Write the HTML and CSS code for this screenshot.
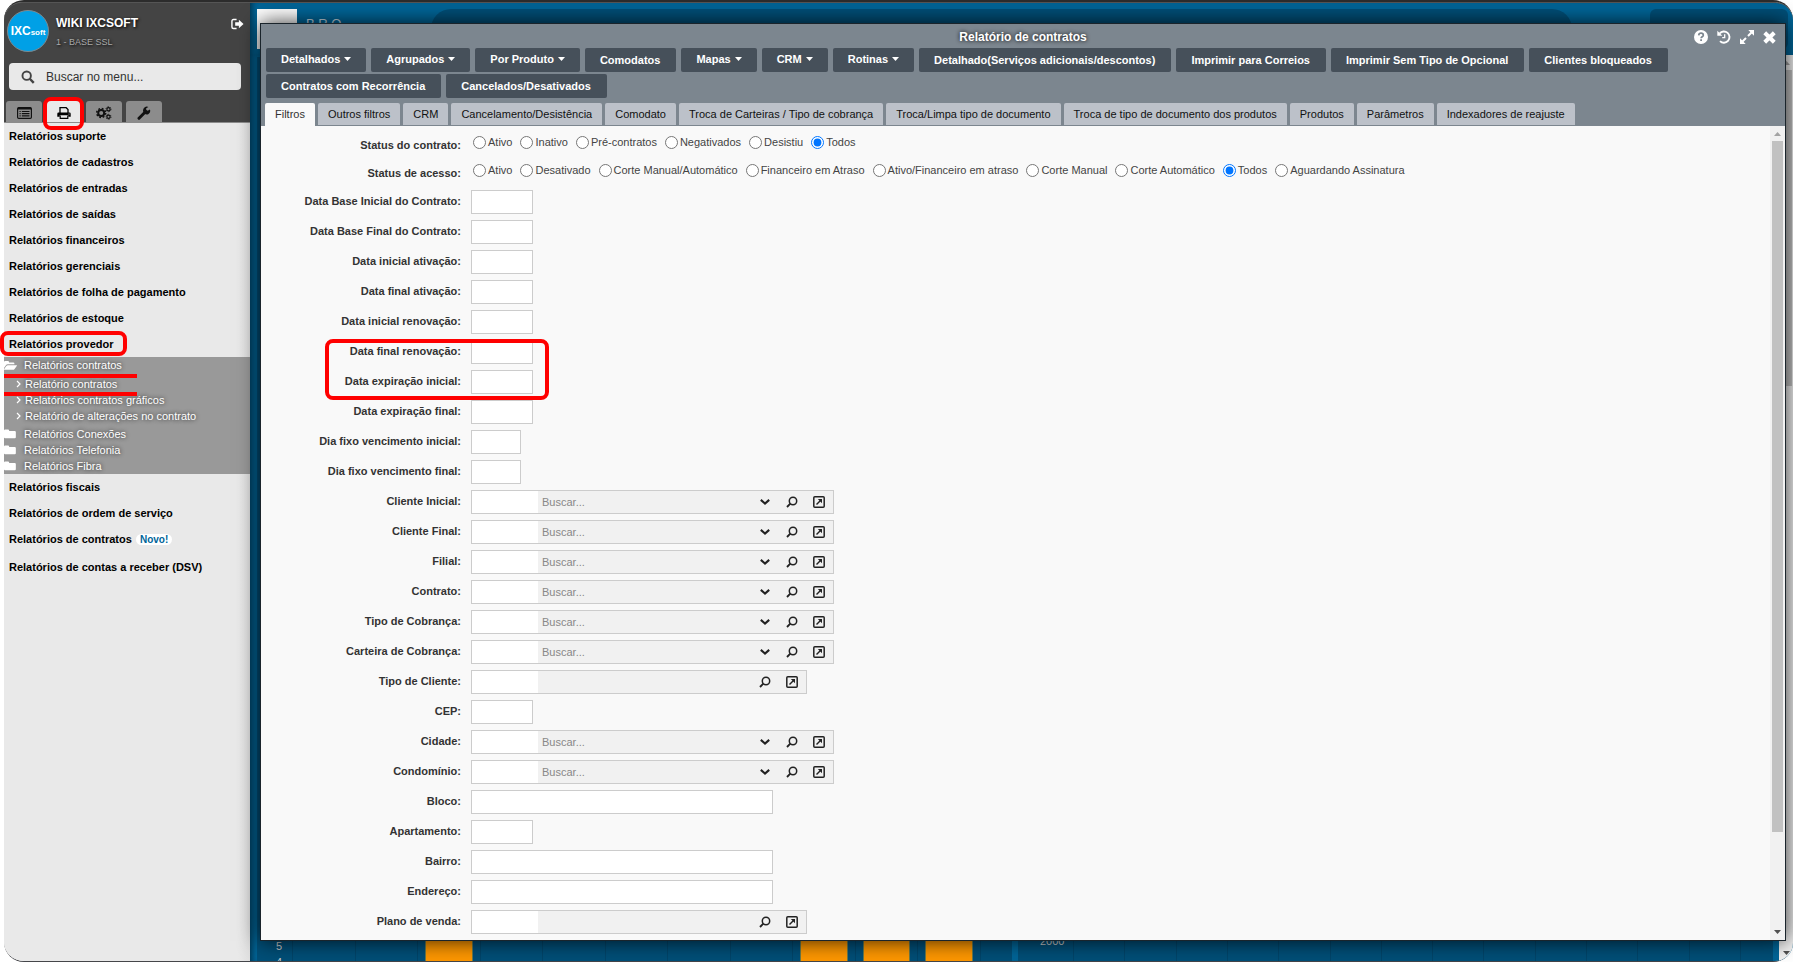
FILE: index.html
```html
<!DOCTYPE html>
<html lang="pt-BR">
<head>
<meta charset="utf-8">
<title>Relatório de contratos</title>
<link rel="stylesheet" href="styles.css">
</head>
<body>
<svg class="sprite" aria-hidden="true">
  <symbol id="i-search" viewBox="0 0 16 16"><circle cx="6.5" cy="6.5" r="4.8" fill="none" stroke="currentColor" stroke-width="2.2"/><path d="M10 10l4.6 4.6" stroke="currentColor" stroke-width="2.8"/></symbol>
  <symbol id="i-logout" viewBox="0 0 14 12"><path d="M6 1.2H2.6A1.6 1.6 0 0 0 1 2.800v6.400a1.600 1.600 0 0 0 1.600 1.600H6" fill="none" stroke="currentColor" stroke-width="1.500"/><path d="M4.500 4.200h4V1.300L13.500 6 8.500 10.700V7.800h-4z" fill="currentColor"/></symbol>
  <symbol id="i-list" viewBox="0 0 15 12"><rect x=".6" y=".6" width="13.800" height="10.800" rx="1.200" fill="none" stroke="currentColor" stroke-width="1.200"/><path d="M1 1.500h13" stroke="currentColor" stroke-width="2"/><path d="M2.500 4.500h1.200M2.500 6.700h1.200M2.500 8.900h1.200M4.800 4.500h7.700M4.800 6.700h7.700M4.800 8.900h7.700" stroke="currentColor" stroke-width="1.200"/></symbol>
  <symbol id="i-print" viewBox="0 0 14 12"><path d="M3 6V.7h6.200L11 2.500V6" fill="none" stroke="currentColor" stroke-width="1.300"/><path d="M1.500 5.500h11a1.200 1.200 0 0 1 1.200 1.200v3.100h-2.400V8.300H2.700v1.500H.3V6.700a1.200 1.200 0 0 1 1.200-1.200z" fill="currentColor"/><path d="M3.200 8.600v2.700h7.600V8.600" fill="none" stroke="currentColor" stroke-width="1.200"/><circle cx="12" cy="6.900" r=".5" fill="#e9e9e9"/></symbol>
  <symbol id="i-gears" viewBox="0 0 16 14"><circle cx="5.200" cy="7" r="3" fill="none" stroke="currentColor" stroke-width="2"/><circle cx="5.200" cy="7" r="4.500" fill="none" stroke="currentColor" stroke-width="1.500" stroke-dasharray="1.800 1.734"/><circle cx="12.500" cy="3.200" r="1.600" fill="none" stroke="currentColor" stroke-width="1.200"/><circle cx="12.500" cy="3.200" r="2.500" fill="none" stroke="currentColor" stroke-width=".9" stroke-dasharray="1.300 1.318"/><circle cx="12.500" cy="10.800" r="1.600" fill="none" stroke="currentColor" stroke-width="1.200"/><circle cx="12.500" cy="10.800" r="2.500" fill="none" stroke="currentColor" stroke-width=".9" stroke-dasharray="1.300 1.318"/></symbol>
  <symbol id="i-wrench" viewBox="0 0 14 14"><path d="M2 12.300L8 6.300" stroke="currentColor" stroke-width="3" stroke-linecap="round"/><path d="M12.900 3.400l-2.200 1.300-1.500-.9V2.200L11.400.9A3.900 3.900 0 0 0 6 4.500a3.900 3.900 0 0 0 5.200 3.700 3.900 3.900 0 0 0 1.700-4.800z" fill="currentColor"/></symbol>
  <symbol id="i-chev-r" viewBox="0 0 6 8"><path d="M1 1l3 3-3 3" fill="none" stroke="currentColor" stroke-width="1.200"/></symbol>
  <symbol id="i-folder" viewBox="0 0 14 11"><path d="M0 1.500A1.300 1.300 0 0 1 1.300.3h3.400A1.300 1.300 0 0 1 6 1.500v.4h6.500A1.300 1.300 0 0 1 13.800 3.200v6a1.300 1.300 0 0 1-1.300 1.300H1.300A1.300 1.300 0 0 1 0 9.200z" fill="currentColor"/></symbol>
  <symbol id="i-folder-open" viewBox="0 0 15 11"><path d="M0 8.500V1.600A1.300 1.300 0 0 1 1.300.3h3.200a1.300 1.300 0 0 1 1.300 1.300v.3h4.900A1.300 1.300 0 0 1 12 3.200v1H4.500A3 3 0 0 0 2 5.400z" fill="currentColor"/><path d="M4.500 5.200h9.800c.7 0 .8.500.4 1l-2.500 3.300a2.500 2.500 0 0 1-1.900 1H.6c-.6 0-.8-.5-.4-1l2.500-3.300a2.500 2.500 0 0 1 1.800-1z" fill="currentColor"/></symbol>
  <symbol id="i-help" viewBox="0 0 14 14"><circle cx="7" cy="7" r="7" fill="currentColor"/><path d="M4.700 5.300C4.900 3.700 6 3.200 7 3.200c1.300 0 2.300.8 2.300 2 0 1.600-2.200 1.600-2.200 3.100" fill="none" stroke="#7c868f" stroke-width="1.700"/><path d="M6.200 9.300h1.800v1.700H6.200z" fill="#7c868f"/></symbol>
  <symbol id="i-history" viewBox="0 0 14 14"><path d="M2.600 3.500A5.600 5.600 0 1 1 3 11.100" fill="none" stroke="currentColor" stroke-width="1.900"/><path d="M.3.800v5h5z" fill="currentColor"/><path d="M7.700 4.200v3.500H5.200" fill="none" stroke="currentColor" stroke-width="1.300"/></symbol>
  <symbol id="i-expand" viewBox="0 0 14 14"><path d="M8.300 0H14v5.700zM0 8.300V14h5.700z" fill="currentColor"/><path d="M11.500 2.500L8 6M6 8l-3.500 3.500" stroke="currentColor" stroke-width="2"/></symbol>
  <symbol id="i-close" viewBox="0 0 12 12"><path d="M1.600 1.600l8.800 8.800M10.400 1.600l-8.800 8.800" stroke="currentColor" stroke-width="3.700"/></symbol>
  <symbol id="i-down" viewBox="0 0 10 6"><path d="M.8.900L5 4.500 9.200.9" fill="none" stroke="currentColor" stroke-width="2.100"/></symbol>
  <symbol id="i-lens" viewBox="0 0 12 12"><circle cx="7" cy="5" r="3.700" fill="none" stroke="currentColor" stroke-width="1.500"/><path d="M4.300 7.700L1 11" stroke="currentColor" stroke-width="1.900"/></symbol>
  <symbol id="i-ext" viewBox="0 0 12 12"><rect x=".8" y=".8" width="10.400" height="10.400" rx="1" fill="none" stroke="currentColor" stroke-width="1.500"/><path d="M3.500 8.500L7.500 4.500" stroke="currentColor" stroke-width="1.400"/><path d="M4.800 3h4.200v4.200z" fill="currentColor"/></symbol>
  <symbol id="i-caret" viewBox="0 0 7 4"><path d="M0 0h7L3.500 4z" fill="currentColor"/></symbol>
</svg>

<div class="frame">
  <aside class="sidebar">
    <header class="side-head">
      <div class="user">
        <div class="logo"><span class="logo-big">IXC</span><span class="logo-small">soft</span></div>
        <div class="who"><strong class="name">WIKI IXCSOFT</strong><span class="base">1 - BASE SSL</span></div>
        <button class="logout" aria-label="Sair"><svg width="13" height="12"><use href="#i-logout"/></svg></button>
      </div>
      <label class="menu-search"><svg width="14" height="14"><use href="#i-search"/></svg><input type="text" placeholder="Buscar no menu..." aria-label="Buscar no menu"></label>
      <div class="side-tabs">
        <button class="side-tab" aria-label="Menu"><svg width="15" height="12"><use href="#i-list"/></svg></button>
        <button class="side-tab active" aria-label="Relatórios"><svg width="14" height="12"><use href="#i-print"/></svg><span class="mark mark-tab"></span></button>
        <button class="side-tab" aria-label="Configurações"><svg width="16" height="14"><use href="#i-gears"/></svg></button>
        <button class="side-tab" aria-label="Ferramentas"><svg width="14" height="14"><use href="#i-wrench"/></svg></button>
      </div>
    </header>
    <nav class="menu">
      <a href="#">Relatórios suporte</a>
      <a href="#">Relatórios de cadastros</a>
      <a href="#">Relatórios de entradas</a>
      <a href="#">Relatórios de saídas</a>
      <a href="#">Relatórios financeiros</a>
      <a href="#">Relatórios gerenciais</a>
      <a href="#">Relatórios de folha de pagamento</a>
      <a href="#">Relatórios de estoque</a>
      <a href="#">Relatórios provedor<span class="mark mark-item"></span></a>
      <div class="submenu">
        <a class="folder open" href="#"><svg width="13" height="11"><use href="#i-folder-open"/></svg>Relatórios contratos</a>
        <div class="leaves">
          <a class="leaf" href="#"><svg width="6" height="8"><use href="#i-chev-r"/></svg>Relatório contratos</a>
          <a class="leaf" href="#"><svg width="6" height="8"><use href="#i-chev-r"/></svg>Relatórios contratos gráficos</a>
          <a class="leaf" href="#"><svg width="6" height="8"><use href="#i-chev-r"/></svg>Relatório de alterações no contrato</a>
          <span class="mark-lines"></span>
        </div>
        <a class="folder" href="#"><svg width="12" height="10"><use href="#i-folder"/></svg>Relatórios Conexões</a>
        <a class="folder" href="#"><svg width="12" height="10"><use href="#i-folder"/></svg>Relatórios Telefonia</a>
        <a class="folder" href="#"><svg width="12" height="10"><use href="#i-folder"/></svg>Relatórios Fibra</a>
      </div>
      <a href="#">Relatórios fiscais</a>
      <a href="#">Relatórios de ordem de serviço</a>
      <a class="badged" href="#">Relatórios de contratos <span class="novo">Novo!</span></a>
      <a href="#">Relatórios de contas a receber (DSV)</a>
    </nav>
  </aside>

  <main class="desk">
    <div class="desk-top">
      <div class="thumb"></div>
      <div class="brand">B R O —</div>
      <div class="pill"></div>
      <div class="card-top"></div>
    </div>
    <div class="desk-body">
      <div class="charts">
        <section class="chart chart-a">
          <div class="ticks"><span>5</span><span>4</span></div>
          <div class="plot">
            <i></i><i></i><i class="bar"></i><i></i><i></i><i></i><i></i><i></i><i class="bar"></i><i class="bar"></i><i class="bar"></i>
          </div>
        </section>
        <section class="chart chart-b">
          <div class="ticks">2000</div>
          <div class="plot"><i></i><i></i><i></i><i></i><i></i><i></i><i></i><i></i><i></i><i></i><i></i><i></i><i></i></div>
        </section>
      </div>
      <div class="scroll scroll-page"><svg width="7" height="4"><use href="#i-caret"/></svg><div class="scroll-thumb"></div><svg width="7" height="4"><use href="#i-caret"/></svg></div>
    </div>
  </main>
</div>

<section class="window">
  <header class="win-head">
    <div class="title-bar">
      <h1>Relatório de contratos</h1>
      <div class="win-actions">
        <button aria-label="Ajuda"><svg width="14" height="14"><use href="#i-help"/></svg></button>
        <button aria-label="Histórico"><svg width="14" height="14"><use href="#i-history"/></svg></button>
        <button aria-label="Expandir"><svg width="14" height="14"><use href="#i-expand"/></svg></button>
        <button aria-label="Fechar"><svg width="13" height="13"><use href="#i-close"/></svg></button>
      </div>
    </div>
    <div class="toolbar">
      <button class="drop">Detalhados<svg width="7" height="4"><use href="#i-caret"/></svg></button>
      <button class="drop">Agrupados<svg width="7" height="4"><use href="#i-caret"/></svg></button>
      <button class="drop">Por Produto<svg width="7" height="4"><use href="#i-caret"/></svg></button>
      <button>Comodatos</button>
      <button class="drop">Mapas<svg width="7" height="4"><use href="#i-caret"/></svg></button>
      <button class="drop">CRM<svg width="7" height="4"><use href="#i-caret"/></svg></button>
      <button class="drop">Rotinas<svg width="7" height="4"><use href="#i-caret"/></svg></button>
      <button>Detalhado(Serviços adicionais/descontos)</button>
      <button>Imprimir para Correios</button>
      <button>Imprimir Sem Tipo de Opcional</button>
      <button>Clientes bloqueados</button>
      <button>Contratos com Recorrência</button>
      <button>Cancelados/Desativados</button>
    </div>
    <div class="tabs">
      <button class="tab current">Filtros</button>
      <button class="tab">Outros filtros</button>
      <button class="tab">CRM</button>
      <button class="tab">Cancelamento/Desistência</button>
      <button class="tab">Comodato</button>
      <button class="tab">Troca de Carteiras / Tipo de cobrança</button>
      <button class="tab">Troca/Limpa tipo de documento</button>
      <button class="tab">Troca de tipo de documento dos produtos</button>
      <button class="tab">Produtos</button>
      <button class="tab">Parâmetros</button>
      <button class="tab">Indexadores de reajuste</button>
    </div>
  </header>
  <div class="win-body">
    <form class="form">
      <div class="row options">
        <span class="lbl">Status do contrato:</span>
        <div class="radios">
          <label><input type="radio" name="sc">Ativo</label>
          <label><input type="radio" name="sc">Inativo</label>
          <label><input type="radio" name="sc">Pré-contratos</label>
          <label><input type="radio" name="sc">Negativados</label>
          <label><input type="radio" name="sc">Desistiu</label>
          <label><input type="radio" name="sc" checked>Todos</label>
        </div>
      </div>
      <div class="row options">
        <span class="lbl">Status de acesso:</span>
        <div class="radios">
          <label><input type="radio" name="sa">Ativo</label>
          <label><input type="radio" name="sa">Desativado</label>
          <label><input type="radio" name="sa">Corte Manual/Automático</label>
          <label><input type="radio" name="sa">Financeiro em Atraso</label>
          <label><input type="radio" name="sa">Ativo/Financeiro em atraso</label>
          <label><input type="radio" name="sa">Corte Manual</label>
          <label><input type="radio" name="sa">Corte Automático</label>
          <label><input type="radio" name="sa" checked>Todos</label>
          <label><input type="radio" name="sa">Aguardando Assinatura</label>
        </div>
      </div>
      <div class="fields">
        <div class="row"><label class="lbl" for="f1">Data Base Inicial do Contrato:</label><input id="f1" class="date" type="text"></div>
        <div class="row"><label class="lbl" for="f2">Data Base Final do Contrato:</label><input id="f2" class="date" type="text"></div>
        <div class="row"><label class="lbl" for="f3">Data inicial ativação:</label><input id="f3" class="date" type="text"></div>
        <div class="row"><label class="lbl" for="f4">Data final ativação:</label><input id="f4" class="date" type="text"></div>
        <div class="row"><label class="lbl" for="f5">Data inicial renovação:</label><input id="f5" class="date" type="text"></div>
        <div class="row"><label class="lbl" for="f6">Data final renovação:</label><input id="f6" class="date" type="text"><span class="mark mark-fields"></span></div>
        <div class="row"><label class="lbl" for="f7">Data expiração inicial:</label><input id="f7" class="date" type="text"></div>
        <div class="row"><label class="lbl" for="f8">Data expiração final:</label><input id="f8" class="date" type="text"></div>
        <div class="row"><label class="lbl" for="f9">Dia fixo vencimento inicial:</label><input id="f9" class="day" type="text"></div>
        <div class="row"><label class="lbl" for="f10">Dia fixo vencimento final:</label><input id="f10" class="day" type="text"></div>
        <div class="row"><label class="lbl" for="f11">Cliente Inicial:</label><div class="lookup"><input id="f11" class="code" type="text"><input class="query" type="text" placeholder="Buscar..." aria-label="Buscar cliente inicial"><button type="button" aria-label="Abrir lista"><svg width="10" height="6"><use href="#i-down"/></svg></button><button type="button" aria-label="Pesquisar"><svg width="12" height="12"><use href="#i-lens"/></svg></button><button type="button" aria-label="Abrir cadastro"><svg width="12" height="12"><use href="#i-ext"/></svg></button></div></div>
        <div class="row"><label class="lbl" for="f12">Cliente Final:</label><div class="lookup"><input id="f12" class="code" type="text"><input class="query" type="text" placeholder="Buscar..." aria-label="Buscar cliente final"><button type="button" aria-label="Abrir lista"><svg width="10" height="6"><use href="#i-down"/></svg></button><button type="button" aria-label="Pesquisar"><svg width="12" height="12"><use href="#i-lens"/></svg></button><button type="button" aria-label="Abrir cadastro"><svg width="12" height="12"><use href="#i-ext"/></svg></button></div></div>
        <div class="row"><label class="lbl" for="f13">Filial:</label><div class="lookup"><input id="f13" class="code" type="text"><input class="query" type="text" placeholder="Buscar..." aria-label="Buscar filial"><button type="button" aria-label="Abrir lista"><svg width="10" height="6"><use href="#i-down"/></svg></button><button type="button" aria-label="Pesquisar"><svg width="12" height="12"><use href="#i-lens"/></svg></button><button type="button" aria-label="Abrir cadastro"><svg width="12" height="12"><use href="#i-ext"/></svg></button></div></div>
        <div class="row"><label class="lbl" for="f14">Contrato:</label><div class="lookup"><input id="f14" class="code" type="text"><input class="query" type="text" placeholder="Buscar..." aria-label="Buscar contrato"><button type="button" aria-label="Abrir lista"><svg width="10" height="6"><use href="#i-down"/></svg></button><button type="button" aria-label="Pesquisar"><svg width="12" height="12"><use href="#i-lens"/></svg></button><button type="button" aria-label="Abrir cadastro"><svg width="12" height="12"><use href="#i-ext"/></svg></button></div></div>
        <div class="row"><label class="lbl" for="f15">Tipo de Cobrança:</label><div class="lookup"><input id="f15" class="code" type="text"><input class="query" type="text" placeholder="Buscar..." aria-label="Buscar tipo de cobrança"><button type="button" aria-label="Abrir lista"><svg width="10" height="6"><use href="#i-down"/></svg></button><button type="button" aria-label="Pesquisar"><svg width="12" height="12"><use href="#i-lens"/></svg></button><button type="button" aria-label="Abrir cadastro"><svg width="12" height="12"><use href="#i-ext"/></svg></button></div></div>
        <div class="row"><label class="lbl" for="f16">Carteira de Cobrança:</label><div class="lookup"><input id="f16" class="code" type="text"><input class="query" type="text" placeholder="Buscar..." aria-label="Buscar carteira de cobrança"><button type="button" aria-label="Abrir lista"><svg width="10" height="6"><use href="#i-down"/></svg></button><button type="button" aria-label="Pesquisar"><svg width="12" height="12"><use href="#i-lens"/></svg></button><button type="button" aria-label="Abrir cadastro"><svg width="12" height="12"><use href="#i-ext"/></svg></button></div></div>
        <div class="row"><label class="lbl" for="f17">Tipo de Cliente:</label><div class="lookup short"><input id="f17" class="code" type="text"><input class="query" type="text" aria-label="Descrição do tipo de cliente"><button type="button" aria-label="Pesquisar"><svg width="12" height="12"><use href="#i-lens"/></svg></button><button type="button" aria-label="Abrir cadastro"><svg width="12" height="12"><use href="#i-ext"/></svg></button></div></div>
        <div class="row"><label class="lbl" for="f18">CEP:</label><input id="f18" class="date" type="text"></div>
        <div class="row"><label class="lbl" for="f19">Cidade:</label><div class="lookup"><input id="f19" class="code" type="text"><input class="query" type="text" placeholder="Buscar..." aria-label="Buscar cidade"><button type="button" aria-label="Abrir lista"><svg width="10" height="6"><use href="#i-down"/></svg></button><button type="button" aria-label="Pesquisar"><svg width="12" height="12"><use href="#i-lens"/></svg></button><button type="button" aria-label="Abrir cadastro"><svg width="12" height="12"><use href="#i-ext"/></svg></button></div></div>
        <div class="row"><label class="lbl" for="f20">Condomínio:</label><div class="lookup"><input id="f20" class="code" type="text"><input class="query" type="text" placeholder="Buscar..." aria-label="Buscar condomínio"><button type="button" aria-label="Abrir lista"><svg width="10" height="6"><use href="#i-down"/></svg></button><button type="button" aria-label="Pesquisar"><svg width="12" height="12"><use href="#i-lens"/></svg></button><button type="button" aria-label="Abrir cadastro"><svg width="12" height="12"><use href="#i-ext"/></svg></button></div></div>
        <div class="row"><label class="lbl" for="f21">Bloco:</label><input id="f21" class="long" type="text"></div>
        <div class="row"><label class="lbl" for="f22">Apartamento:</label><input id="f22" class="date" type="text"></div>
        <div class="row"><label class="lbl" for="f23">Bairro:</label><input id="f23" class="long" type="text"></div>
        <div class="row"><label class="lbl" for="f24">Endereço:</label><input id="f24" class="long" type="text"></div>
        <div class="row"><label class="lbl" for="f25">Plano de venda:</label><div class="lookup short"><input id="f25" class="code" type="text"><input class="query" type="text" aria-label="Descrição do plano de venda"><button type="button" aria-label="Pesquisar"><svg width="12" height="12"><use href="#i-lens"/></svg></button><button type="button" aria-label="Abrir cadastro"><svg width="12" height="12"><use href="#i-ext"/></svg></button></div></div>
      </div>
    </form>
    <div class="scroll scroll-form"><svg width="7" height="4"><use href="#i-caret"/></svg><div class="scroll-thumb"></div><svg width="7" height="4"><use href="#i-caret"/></svg></div>
  </div>
</section>
</body>
</html>
```
FILE: styles.css
```css
* { box-sizing: border-box; }

body {
  margin: 0;
  height: 100vh;
  position: relative;
  overflow: hidden;
  background: #fff;
  font-family: "Liberation Sans", Arial, sans-serif;
  font-size: 11px;
}

button, input { font: inherit; color: inherit; }
button { border: 0; padding: 0; background: none; }
a { color: inherit; text-decoration: none; }
svg { display: block; flex: none; }
.sprite { position: absolute; width: 0; height: 0; }

.frame {
  height: 100%;
  margin-left: 4px;
  display: flex;
  border-top: 2px solid #2c2c2c;
  border-bottom: 1px solid #45464a;
  border-radius: 20px;
}

/* red highlight marks */
.mark {
  position: absolute;
  border: 4px solid #f00;
  border-radius: 8px;
  z-index: 3;
}

/* sidebar */
.sidebar {
  flex: 0 0 246px;
  display: flex;
  flex-direction: column;
  background: linear-gradient(90deg, #e9e9e9 95%, #e0e0e0);
  border-radius: 20px 0 0 20px;
  position: relative;
}
.side-head {
  height: 121px;
  padding: 7px 0 0;
  display: flex;
  flex-direction: column;
  background: #444;
  border-top: 1px solid #555;
  border-bottom: 1px solid #8c8c8c;
  border-radius: 18px 0 0 0;
}
.user { display: flex; height: 42px; padding: 0 6px 0 3px; }
.logo {
  flex: none;
  width: 42px;
  height: 42px;
  border-radius: 50%;
  border: 1px solid #7d8a90;
  background: #00a0e6;
  color: #fff;
  font-weight: bold;
  display: flex;
  justify-content: center;
  align-items: baseline;
  line-height: 40px;
}
.logo-big { font-size: 12px; }
.logo-small { font-size: 8px; }
.who { flex: 1; padding: 5px 0 0 7px; display: flex; flex-direction: column; text-shadow: 1px 1px 3px #000; }
.name { font-size: 12px; line-height: 16px; color: #fff; }
.base { font-size: 9px; line-height: 12px; color: #aaa; margin-top: 5px; }
.logout { align-self: flex-start; color: #fff; margin-top: 8px; }
.menu-search {
  display: flex;
  align-items: center;
  gap: 11px;
  height: 27px;
  margin: 11px 9px 0 5px;
  padding: 0 12px;
  border-radius: 4px;
  background: #e9e9e9;
  color: #444;
}
.menu-search input { flex: 1; min-width: 0; border: 0; padding: 0; background: none; font-size: 12px; outline: 0; }
.menu-search input::placeholder { color: #333; }
.side-tabs { display: flex; gap: 4px; margin-top: auto; padding-left: 2px; }
.side-tab {
  width: 36px;
  height: 21px;
  display: flex;
  align-items: center;
  justify-content: center;
  background: #8c8c8c;
  border-radius: 3px 3px 0 0;
  color: #111;
  position: relative;
}
.side-tab svg { margin-top: 2px; }
.side-tab.active { background: #e9e9e9; color: #000; }
.mark-tab { inset: -4px -2px -8px -3px; }

.menu { display: flex; flex-direction: column; color: #000; }
.menu > a { font-weight: bold; line-height: 26px; padding-left: 5px; position: relative; white-space: nowrap; }
.menu > .badged { padding-bottom: 1px; }
.mark-item { left: -4px; top: 0; width: 127px; height: 25px; }
.novo { background: #fff; color: #00659a; border-radius: 6px; padding: 0 4px; margin-left: 1px; font-size: 10px; }
.submenu {
  background: #999;
  color: #fff;
  line-height: 16px;
  text-shadow: 0 0 4px #222;
  display: flex;
  flex-direction: column;
}
.folder, .leaf { display: flex; align-items: center; }
.folder { gap: 8px; }
.folder.open { gap: 7px; }
.leaves { padding: 3px 0 2px 12px; position: relative; }
.leaf { gap: 3px; }
.mark-lines {
  position: absolute;
  left: 0;
  top: 1px;
  width: 133px;
  height: 22px;
  border-top: 4px solid #f00;
  border-bottom: 4px solid #f00;
}

/* dashboard behind the window */
.desk {
  flex: 1;
  min-width: 0;
  display: flex;
  flex-direction: column;
  overflow: hidden;
  border-radius: 0 18px 18px 0;
  background: #069;
  border-top: 1px solid #555;
}
.desk-top { display: flex; height: 52px; padding: 6px 5px 6px 7px; box-shadow: inset 6px 0 6px -4px #00324c; }
.thumb { width: 40px; background: #fff; }
.brand { width: 134px; padding-left: 9px; margin-top: 7px; font-size: 13px; line-height: 16px; color: #c5d8e2; white-space: nowrap; }
.pill { flex: 1; background: #004f78; border-radius: 20px; }
.card-top { width: 138px; margin-left: 78px; background: #004f78; border-radius: 6px; }
.desk-body { flex: 1; min-height: 0; display: flex; box-shadow: inset 6px 0 6px -4px #00324c; }
.charts { flex: 1; display: grid; grid-template-columns: 1fr 1fr; gap: 6px; padding: 2px 6px 0 7px; }
.chart { display: flex; min-width: 0; background: #004f78; color: #ccc; overflow: hidden; }
.chart-a { padding-right: 31px; }
.chart-b { padding-right: 32px; }
.ticks { display: flex; flex-direction: column; justify-content: flex-end; line-height: 16px; flex: none; }
.chart-a .ticks { width: 35px; padding-left: 19px; margin-bottom: -9px; }
.chart-b .ticks { width: 55px; padding: 0 0 12px 22px; }
.plot { flex: 1; display: grid; grid-auto-flow: column; grid-auto-columns: 1fr; border-right: 1px solid #00456a; }
.plot i { border-left: 1px solid #00456a; display: flex; justify-content: center; }
.bar::after { content: ""; width: 74%; background: #ff9800; border: 1px solid #6b7a4a; border-width: 0 1px; }

.scroll { flex: none; display: flex; flex-direction: column; align-items: center; background: #f1f1f1; color: #505050; }
.scroll-thumb { background: #c1c1c1; }
.scroll-page { width: 14px; padding: 6px 0; }
.scroll-page .scroll-thumb { width: 12px; flex: 0 0 316px; margin: 5px 0 auto; }

/* report window */
.window {
  position: absolute;
  inset: 23px 7px 21px 260px;
  display: flex;
  flex-direction: column;
  border: 1px solid #1a242b;
  background: #f9f9f9;
  box-shadow: 0 0 20px rgba(0, 0, 0, .8);
}
.win-head { background: #7c868f; }
.title-bar { height: 24px; padding-top: 2px; display: flex; justify-content: center; align-items: center; position: relative; }
.title-bar h1 { margin: 0; font-size: 12px; line-height: 22px; color: #fff; text-shadow: 0 0 4px #000; }
.win-actions { position: absolute; right: 9px; top: 6px; display: flex; gap: 9px; color: #fff; }
.toolbar { display: flex; flex-wrap: wrap; gap: 2px 5px; padding: 0 5px; }
.toolbar button {
  display: flex;
  align-items: center;
  height: 24px;
  padding: 0 16px 0 15px;
  border-radius: 2px;
  background: #46505a;
  color: #fff;
  font-weight: bold;
  white-space: nowrap;
}
.toolbar .drop { gap: 4px; padding: 0 15px 2px; }
.tabs { display: flex; gap: 3px; padding: 5px 4px 0; height: 28px; }
.tab {
  height: 22px;
  padding: 0 10px;
  border-radius: 2px 2px 0 0;
  background: #bcc1c9;
  color: #111;
  white-space: nowrap;
}
.tab.current { background: #f9f9f9; color: #333; height: 23px; padding-bottom: 1px; }

.win-body { flex: 1; min-height: 0; display: flex; }
.form { flex: 1; min-width: 0; padding-top: 2px; overflow: hidden; color: #333; }
.row { display: flex; position: relative; }
.lbl { width: 200px; flex: none; text-align: right; font-weight: bold; line-height: 22px; margin-right: 10px; }
.options { height: 28px; }
.options .lbl { line-height: 34px; }
.radios { display: flex; gap: 8px; padding-left: 2px; line-height: 28px; color: #444; }
.radios label { display: flex; align-items: center; white-space: nowrap; }
.radios input { width: 13px; height: 13px; margin: 0 2px 0 0; }
.fields { display: flex; flex-direction: column; gap: 6px; padding-top: 6px; }
.row > input, .lookup { height: 24px; border: 1px solid #ccc; background: #fff; padding: 0 4px; outline: 0; }
.date { width: 62px; }
.day { width: 50px; }
.long { width: 302px; }
.row > .lookup { width: 363px; padding: 0 1px 0 0; display: flex; background: #f1f1f1; }
.row > .lookup.short { width: 336px; }
.lookup input { border: 0; padding: 0 4px; outline: 0; height: 22px; }
.code { width: 66px; background: #fff; }
.query { flex: 1; min-width: 0; background: none; }
.query::placeholder { color: #888; }
.lookup button { width: 27px; display: flex; align-items: center; justify-content: center; color: #222; }
.mark-fields { left: 64px; top: -1px; width: 224px; height: 61px; }

.scroll-form { width: 15px; padding: 6px 0; }
.scroll-form svg:first-child, .scroll-page svg:first-child { transform: rotate(180deg); color: #a3a3a3; }
.scroll-form .scroll-thumb { width: 11px; flex: 85 0 0; margin: 5px 0 0; }
.scroll-form svg:last-child { margin-top: 98px; }
```
